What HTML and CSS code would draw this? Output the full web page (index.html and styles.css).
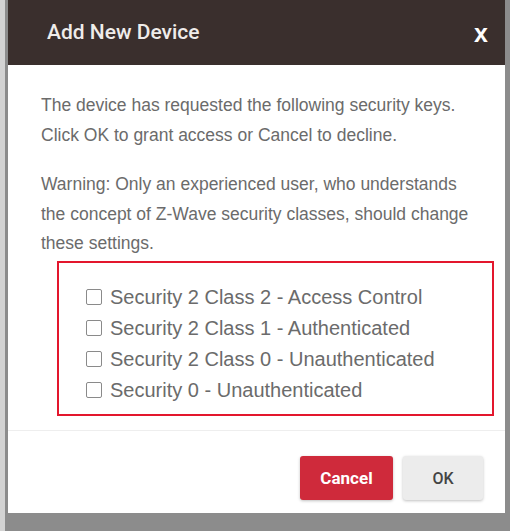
FILE: index.html
```html
<!DOCTYPE html>
<html>
<head>
<meta charset="utf-8">
<link rel="stylesheet" href="styles.css">
</head>
<body>
<div class="dialog">
  <div class="header">
    <span class="title">Add New Device</span>
    <span class="close">x</span>
  </div>
  <div class="body">
    <p class="para">The device has requested the following security keys. Click OK to grant access or Cancel to decline.</p>
    <p class="para">Warning: Only an experienced user, who understands the concept of Z-Wave security classes, should change these settings.</p>
    <div class="keys">
      <label class="key"><span class="box"></span>Security 2 Class 2 - Access Control</label>
      <label class="key"><span class="box"></span>Security 2 Class 1 - Authenticated</label>
      <label class="key"><span class="box"></span>Security 2 Class 0 - Unauthenticated</label>
      <label class="key"><span class="box"></span>Security 0 - Unauthenticated</label>
    </div>
  </div>
  <div class="footer">
    <button class="btn btn-cancel">Cancel</button>
    <button class="btn btn-ok">OK</button>
  </div>
</div>
</body>
</html>
```

FILE: styles.css
```css
html, body {
  margin: 0;
  padding: 0;
}
body {
  width: 510px;
  height: 531px;
  overflow: hidden;
  background: linear-gradient(to right, #d3d3d3 0, #d3d3d3 5px, #8c8c8c 5px);
}
.dialog {
  margin-left: 8px;
  width: 497px;
  height: 513px;
  background: #fff;
  display: flex;
  flex-direction: column;
}
.header {
  height: 65px;
  background: #3a2f2d;
  display: flex;
  align-items: center;
  justify-content: space-between;
  padding: 0 17px 0 39px;
  box-sizing: border-box;
}
.title {
  font-family: Roboto, "Liberation Sans", sans-serif;
  font-weight: 500;
  font-size: 21px;
  color: #efecea;
  margin-top: -2px;
}
.close {
  font-family: "Liberation Sans", Arial, sans-serif;
  font-weight: bold;
  font-size: 25px;
  color: #fff;
  margin-top: 2px;
}
.body {
  padding: 25px 11px 0 33px;
  font-family: "Liberation Sans", Arial, sans-serif;
  color: #6b6b6b;
  height: 366px;
  box-sizing: border-box;
  border-bottom: 1px solid #eeeeee;
}
.para {
  margin: 0 0 20px 0;
  max-width: 432px;
  font-size: 17.5px;
  line-height: 30px;
}
.para + .para {
  margin-bottom: 0;
  line-height: 29.5px;
}
.keys {
  margin-left: 16px;
  margin-top: 2px;
  border: 2px solid #e3172d;
  height: 155px;
  box-sizing: border-box;
  padding: 19px 0 0 27px;
  display: flex;
  flex-direction: column;
}
.key {
  display: flex;
  align-items: center;
  height: 31px;
  font-size: 20px;
  color: #6b6b6b;
}
.box {
  width: 14px;
  height: 14px;
  border: 1px solid #8a8a8a;
  border-radius: 2px;
  margin-right: 8px;
  background: #fff;
}
.footer {
  display: flex;
  justify-content: flex-end;
  gap: 10px;
  padding: 25px 22px 0 0;
}
.btn {
  height: 44px;
  border: none;
  border-radius: 3px;
  font-family: Roboto, "Liberation Sans", sans-serif;
  font-size: 16px;
  box-shadow: 0 1px 3px rgba(0,0,0,0.25);
  padding: 0;
}
.btn-cancel {
  width: 93px;
  background: #cf2a3b;
  color: #fff;
  font-weight: bold;
  font-size: 17px;
}
.btn-ok {
  width: 80px;
  background: #ececec;
  color: #444;
  font-weight: 500;
}
```
